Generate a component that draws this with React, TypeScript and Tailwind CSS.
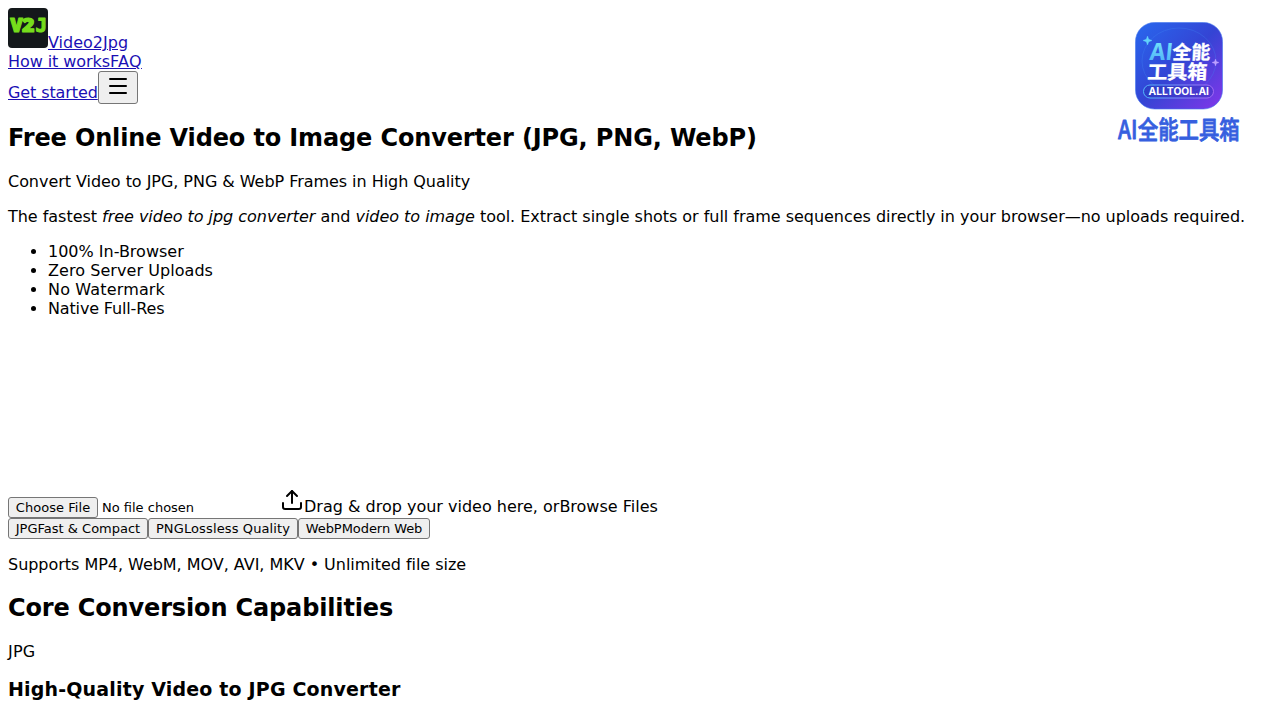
import { Menu, Upload } from "lucide-react";

const features = [
  { label: "100% In-Browser", tracking: "" },
  { label: "Zero Server Uploads", tracking: "tracking-[0.06px]" },
  { label: "No Watermark", tracking: "tracking-[0.16px]" },
  { label: "Native Full-Res", tracking: "tracking-[-0.15px]" },
];

const formats = [
  { name: "JPG", note: "Fast & Compact", size: "w-[140px]" },
  { name: "PNG", note: "Lossless Quality", size: "w-[150px] tracking-[0.12px]" },
  { name: "WebP", note: "Modern Web", size: "w-[132px] tracking-[-0.06px]" },
];

const linkClass = "text-[#1a0fb4] underline";
const buttonClass =
  "h-[21px] rounded-[3px] border border-[#767676] bg-[#efefef] text-center text-[13px] leading-[19px] whitespace-nowrap";

function Logo() {
  return (
    <svg width="40" height="40" viewBox="0 0 40 40" className="shrink-0">
      <rect width="40" height="40" rx="4" fill="#14181b" />
      <g
        fill="#76dd1c"
        stroke="#76dd1c"
        strokeWidth="1.2"
        strokeLinejoin="round"
        fontFamily="'Open Sans', sans-serif"
        fontWeight="800"
        fontSize="19"
      >
        <text x="2.2" y="23.5" textLength="12.5" lengthAdjust="spacingAndGlyphs">V</text>
        <text x="14" y="23.5" textLength="12.5" lengthAdjust="spacingAndGlyphs">2</text>
        <text x="27.5" y="23.5" fontFamily="'DejaVu Sans Mono', monospace" fontWeight="700" textLength="11.5" lengthAdjust="spacingAndGlyphs">J</text>
      </g>
    </svg>
  );
}

function Header() {
  return (
    <header>
      <div className="flex h-11 items-start">
        <Logo />
        <a href="#" className={`mt-[25px] ${linkClass}`}>Video2Jpg</a>
      </div>
      <nav className="flex h-[19px]">
        <a href="#" className={`w-[102px] tracking-[-0.08px] whitespace-nowrap ${linkClass}`}>How it works</a>
        <a href="#" className={`tracking-[0.3px] ${linkClass}`}>FAQ</a>
      </nav>
      <div className="flex h-[33px] items-start">
        <a href="#" className={`mt-3 w-[90px] tracking-[-0.1px] whitespace-nowrap ${linkClass}`}>Get started</a>
        <button
          aria-label="Menu"
          className="flex h-[33px] w-10 justify-center rounded-[3px] border border-[#767676] bg-[#efefef] pt-0.5"
        >
          <Menu size={24} />
        </button>
      </div>
    </header>
  );
}

function ToolboxBadge() {
  return (
    <svg
      width="140"
      height="140"
      viewBox="0 0 140 140"
      className="absolute top-[10px] left-[1110px]"
      fontFamily="'Noto Sans CJK SC', sans-serif"
    >
      <defs>
        <linearGradient id="tile" x1="0" y1="0" x2="1" y2="1">
          <stop offset="0" stopColor="#2868ee" />
          <stop offset="0.5" stopColor="#3444d4" />
          <stop offset="1" stopColor="#8336ea" />
        </linearGradient>
        <linearGradient id="ai" x1="0" y1="0" x2="0" y2="1">
          <stop offset="0" stopColor="#78eefa" />
          <stop offset="1" stopColor="#4ba8f8" />
        </linearGradient>
        <linearGradient id="pill" x1="0" y1="0" x2="1" y2="0">
          <stop offset="0" stopColor="#51b6fa" />
          <stop offset="1" stopColor="#a268f4" />
        </linearGradient>
      </defs>
      <rect x="25.5" y="12.5" width="87" height="86.5" rx="19" fill="url(#tile)" stroke="#4277ee" strokeOpacity="0.6" />
      <ellipse cx="69" cy="51" rx="37" ry="33" fill="none" stroke="#438bf5" strokeOpacity="0.35" strokeWidth="0.8" />
      <path d="M37.5 26l1.2 3.3 3.3 1.2-3.3 1.2-1.2 3.3-1.2-3.3-3.3-1.2 3.3-1.2z" fill="#62d4fa" stroke="#62d4fa" strokeWidth="0.4" />
      <path d="M105.5 49l.9 2.6 2.6.9-2.6.9-.9 2.6-.9-2.6-2.6-.9 2.6-.9z" fill="#bda0ff" stroke="#bda0ff" strokeWidth="0.4" />
      <g fontWeight="700">
        <text
          transform="translate(38.5 50) skewX(-6)"
          fontSize="23.5"
          fontFamily="Inter, sans-serif"
          fill="url(#ai)"
          textLength="23"
          lengthAdjust="spacingAndGlyphs"
        >
          AI
        </text>
        <g fill="#fff" stroke="#fff" strokeWidth="0.3">
          <text transform="translate(62 49) skewX(-3)" fontSize="19" textLength="38" lengthAdjust="spacingAndGlyphs">全能</text>
          <text transform="translate(37 68.5) skewX(-3)" fontSize="19.5" textLength="60" lengthAdjust="spacingAndGlyphs">工具箱</text>
        </g>
      </g>
      <rect x="33.5" y="75" width="70" height="13" rx="6.5" fill="#2632b0" fillOpacity="0.35" stroke="url(#pill)" />
      <text
        x="38.5"
        y="85"
        fontSize="10"
        fontWeight="700"
        fontFamily="Inter, sans-serif"
        fill="#fff"
        textLength="60.5"
        lengthAdjust="spacingAndGlyphs"
      >
        ALLTOOL.AI
      </text>
      <g fill="#365fdf" stroke="#365fdf" strokeWidth="0.8" strokeLinejoin="round" fontWeight="500">
        <text transform="translate(8 128.5) scale(0.75 1)" fontSize="25" textLength="26" lengthAdjust="spacingAndGlyphs">AI</text>
        <text transform="translate(27.8 128.5) scale(0.79 1)" fontSize="25.5" textLength="129" lengthAdjust="spacingAndGlyphs">全能工具箱</text>
      </g>
    </svg>
  );
}

function UploadArea() {
  return (
    <section className="mt-[170px]">
      <div className="flex h-[30px] items-start">
        <div className="mt-[9px] flex w-[272px]">
          <button className={`w-[90px] tracking-[0.05px] ${buttonClass}`}>Choose File</button>
          <span className="ml-1 text-[13px] leading-[21px]">No file chosen</span>
        </div>
        <Upload size={24} />
        <span className="mt-[9px]">Drag &amp; drop your video here, or</span>
        <span className="mt-[9px]">Browse Files</span>
      </div>
      <div className="flex">
        {formats.map((format) => (
          <button key={format.name} className={`${format.size} ${buttonClass}`}>
            {format.name}
            {format.note}
          </button>
        ))}
      </div>
      <p className="mt-4 tracking-[-0.03px]">Supports MP4, WebM, MOV, AVI, MKV • Unlimited file size</p>
    </section>
  );
}

export default function App() {
  return (
    <div className="relative h-screen overflow-hidden bg-white p-2 font-['DejaVu_Sans',sans-serif] text-base leading-[19px] text-black">
      <Header />
      <main>
        <h1 className="mt-5 text-2xl leading-7 font-bold tracking-[-0.14px]">
          Free Online Video to Image Converter (JPG, PNG, WebP)
        </h1>
        <p className="mt-5 tracking-[-0.045px]">Convert Video to JPG, PNG &amp; WebP Frames in High Quality</p>
        <p className="mt-4 tracking-[-0.03px] whitespace-nowrap">
          The fastest <em>free video to jpg converter</em> and <em>video to image</em> tool. Extract single shots or full
          frame sequences directly in your browser—no uploads required.
        </p>
        <ul className="mt-4 list-disc pl-10">
          {features.map(({ label, tracking }) => (
            <li key={label} className={tracking}>{label}</li>
          ))}
        </ul>
        <UploadArea />
        <h2 className="mt-5 text-2xl leading-7 font-bold tracking-[-0.15px]">Core Conversion Capabilities</h2>
        <p className="mt-5 tracking-[0.2px]">JPG</p>
        <h3 className="mt-[17px] text-[19px] leading-[22px] font-bold tracking-[0.17px]">
          High-Quality Video to JPG Converter
        </h3>
      </main>
      <ToolboxBadge />
    </div>
  );
}
